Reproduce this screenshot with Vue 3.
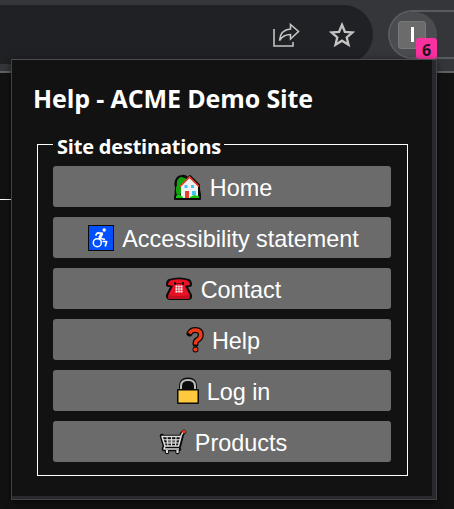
<script setup>
const items = [
  { id: 'home', label: 'Home', w: 28 },
  { id: 'access', label: 'Accessibility statement', w: 28 },
  { id: 'phone', label: 'Contact', w: 28 },
  { id: 'help', label: 'Help', w: 18 },
  { id: 'lock', label: 'Log in', w: 24 },
  { id: 'cart', label: 'Products', w: 28 }
]
</script>

<template>
  <div class="screen">
    <div class="toolbar">
      <div class="address">
        <svg class="share" width="28" height="26" viewBox="0 0 28 26">
          <path d="M2 7V24H21V20" />
          <path d="M7.500 18.500C8 11.500 12 7.500 18.500 7V2.500L26.500 9.500L18.500 17V12.500C13.500 12.500 10 14.500 7.500 18.500Z" />
        </svg>
        <svg class="star" width="26" height="26" viewBox="0 0 26 26">
          <path d="M13 2.800L15.900 9.800L23.500 10.400L17.700 15.300L19.500 22.700L13 18.700L6.500 22.700L8.300 15.300L2.500 10.400L10.100 9.800Z" />
        </svg>
      </div>
      <div class="extensions">
        <div class="disc"><div class="tile"><i></i></div></div>
        <span class="badge">6</span>
      </div>
    </div>
    <div class="page"><div class="rule"></div></div>

    <main class="popup">
      <h1><span>Help - ACME Demo Site</span></h1>
      <fieldset>
        <legend><span>Site destinations</span></legend>
        <button v-for="it in items" :key="it.id" :class="it.id">
          <svg :width="it.w" height="28" :viewBox="`0 0 ${it.w} 28`">
            <g v-if="it.id === 'home'">
              <path d="M2 24C1 20 2 17 2 14C0 9 3 3 8 3C11 2 13 4 14 5L16 3L25 12V16L26 22V26H1V23Z" fill="#0b0b0b" stroke="#0b0b0b" stroke-width="2" stroke-linejoin="round" />
              <path d="M3 22C1 17 2 14 3 12C2 7 5 4 8 4L13 6L9 20Z" fill="#13a10e" />
              <path d="M7 13L15.500 5L24 13V25H7Z" fill="#f2f2f2" />
              <path d="M5.500 14L15.500 4L25 13.500" fill="none" stroke="#e8402a" stroke-width="1.700" />
              <path d="M11 18h4v7h-4z" fill="#e8402a" />
              <path d="M10.500 12h3v3h-3zM17 12h3v3h-3zM18 18h4v4h-4z" fill="#42c4f0" />
              <path d="M2 23L5 21L9 24V25H2ZM16 24L20 22L25 23V25H16Z" fill="#16c60c" />
            </g>
            <g v-else-if="it.id === 'access'">
              <rect x="1" y="1" width="26" height="26" fill="#0b0b0b" />
              <rect x="2" y="2" width="24" height="24" fill="#0050ff" />
              <circle cx="17.200" cy="6" r="1.700" fill="#fff" />
              <path d="M8.500 11.500L10.500 8.800L15 9.200L12.800 14.200L18 15.500M19.800 17L18.200 22.500" fill="none" stroke="#fff" stroke-width="1.700" />
              <path d="M12.500 14L15 9.500" stroke="#fff" stroke-width="3" />
              <path d="M15.500 17.500H19.500" stroke="#fff" stroke-width="1.500" />
              <circle cx="10.300" cy="18.700" r="4" fill="none" stroke="#fff" stroke-width="1.500" />
            </g>
            <g v-else-if="it.id === 'phone'">
              <path d="M4 4Q14 1 24 4Q27 5 27 10Q27 12 23 12L27 20V23Q26 25 23 25H5Q2 25 1 22V20L5 12Q1 12 1 10Q1 5 4 4Z" fill="#0b0b0b" />
              <path d="M3 10Q3 6 7 5Q14 3.500 21 5Q25 6 25 10L19 11V8.500H9V11Z" fill="#e81224" />
              <path d="M9 9H19L24 18.500L25 22Q24 24 22 24H6Q3 24 3 22L4 18.500Z" fill="#e81224" />
              <path d="M3 20Q14 22 25 20V22Q24 24 22 24H6Q3 24 3 22Z" fill="#c50f1f" />
              <path d="M10 7v3M18 7v3" stroke="#0b0b0b" stroke-width="1.500" />
              <path d="M10.500 10.500h7v7h-7z" fill="#fff" />
              <path d="M12.700 10v8M15.200 10v8M10 12.800h8M10 15.300h8" stroke="#e81224" stroke-width=".7" />
            </g>
            <g v-else-if="it.id === 'help'" fill="none">
              <path d="M3.500 7.500Q5 4 9.500 4Q14.800 4 14.800 9Q14.800 12 11.500 14Q9.500 15 9.500 18M9.500 23.500v.1" stroke="#0b0b0b" stroke-width="6" stroke-linecap="round" />
              <path d="M3.500 7.500Q5 4 9.500 4Q14.800 4 14.800 9Q14.800 12 11.500 14Q9.500 15 9.500 18.500" stroke="#f03a17" stroke-width="3.500" />
              <circle cx="9.500" cy="23.500" r="2.100" fill="#f03a17" />
            </g>
            <g v-else-if="it.id === 'lock'">
              <path d="M5 13V9Q5 2.500 12 2.500Q19 2.500 19 9V13" fill="#0b0b0b" stroke="#0b0b0b" stroke-width="4" />
              <path d="M5 13V9Q5 3 12 3Q19 3 19 9V13" fill="none" stroke="#bdbdbd" stroke-width="2" />
              <rect x="1" y="12" width="22" height="15" rx="1" fill="#0b0b0b" />
              <rect x="2.500" y="13.500" width="19" height="12" fill="#ffc83d" />
            </g>
            <g v-else fill="none" stroke-linejoin="round">
              <path d="M3 8L6 18H20L23 6L25 4M6 18L5 21H20M4 9H22L19 18H6ZM8 24v.1M18.500 24v.1" stroke="#0b0b0b" stroke-width="4.500" stroke-linecap="round" />
              <path d="M3 8.500H22L19.500 18H6ZM6 18L5 21H20M24 4L22 8L19.500 18" stroke="#ddd" stroke-width="1.500" />
              <path d="M4 11.800H21M5 15H20M8 9L9 18M12.500 9V18M17 9L16.500 18" stroke="#ddd" stroke-width="1.100" />
              <path d="M8 22v3M18.500 22v3" stroke="#ddd" stroke-width="2.200" />
              <circle cx="25" cy="3.700" r="1.800" fill="#f03a17" />
            </g>
          </svg>
          <span>{{ it.label }}</span>
        </button>
      </fieldset>
    </main>
  </div>
</template>

<style>
body { margin: 0; background: #121212; }
</style>

<style scoped>
* { box-sizing: border-box; }
.screen { position: relative; width: 454px; height: 509px; overflow: hidden; background: #121212; }
.toolbar { height: 73px; padding-top: 5px; background: #35363a; border-bottom: 2px solid #5f6064; display: flex; align-items: flex-start; }
.address { flex: none; width: 373px; height: 59px; background: #202124; border-radius: 0 30px 30px 0; display: flex; align-items: center; justify-content: flex-end; gap: 29px; padding-right: 18px; }
.address svg { fill: none; stroke: #c4c4c4; stroke-width: 1.6; }
.address .star { stroke-width: 2.3; }
.extensions { flex: none; position: relative; margin: 5px 0 0 15px; width: 80px; height: 49px; border: 2px solid #5a5b5f; border-right: 0; border-radius: 25px 0 0 25px; }
.disc { width: 47px; height: 45px; border-radius: 23px; background: #4b4c50; display: flex; align-items: center; justify-content: center; }
.tile { width: 28px; height: 28px; margin-right: 3px; border-radius: 3px; background: #6b6b6b; border: 1px solid #78797b; display: flex; align-items: center; justify-content: center; }
.tile i { width: 3px; height: 15px; background: #fff; margin-left: 1px; }
.badge { position: absolute; left: 26px; top: 26px; width: 21px; height: 21px; border-radius: 3px; background: #fa32a0; color: #20111c; font: bold 16px/24px "Open Sans", sans-serif; text-align: center; }
.page { height: 436px; padding-top: 126px; }
.rule { width: 11px; height: 1px; background: #fff; }
.popup { position: absolute; left: 11px; top: 59px; width: 426px; height: 441px; padding: 0 24px 0 25px; background: #121212; border: 1px solid #414246; border-top-color: #4b4c4f; box-shadow: inset -4px -3px #292a2d, 0 2px 8px #0008; }
h1 { margin: 0; height: 84px; color: #fff; font: bold 25px/76px "Open Sans", sans-serif; white-space: nowrap; }
h1 span { margin-left: -4px; letter-spacing: -0.12px; }
fieldset { margin: -10px 0 0; width: 371px; height: 342px; min-width: 0; border: 1px solid #fff; padding: 0 16px 0 15px; }
legend { width: 171px; height: 20px; padding: 0 0 0 4px; color: #fff; font: bold 20px/25px "Open Sans", sans-serif; white-space: nowrap; }
legend span { letter-spacing: -0.2px; }
button { display: flex; align-items: center; justify-content: center; gap: 8px; width: 338px; height: 41px; margin: 0 0 10px; padding: 0 0 0 2px; border: 0; border-radius: 3px; background: #6b6b6b; color: #fff; font: 23.4px/37px "Liberation Sans", Arial, sans-serif; white-space: nowrap; }
button.access, button.lock { gap: 7px; }
legend + button { margin-top: 12px; }
button svg { flex: none; margin-top: 1px; }
button span { padding-top: 4px; }
</style>
